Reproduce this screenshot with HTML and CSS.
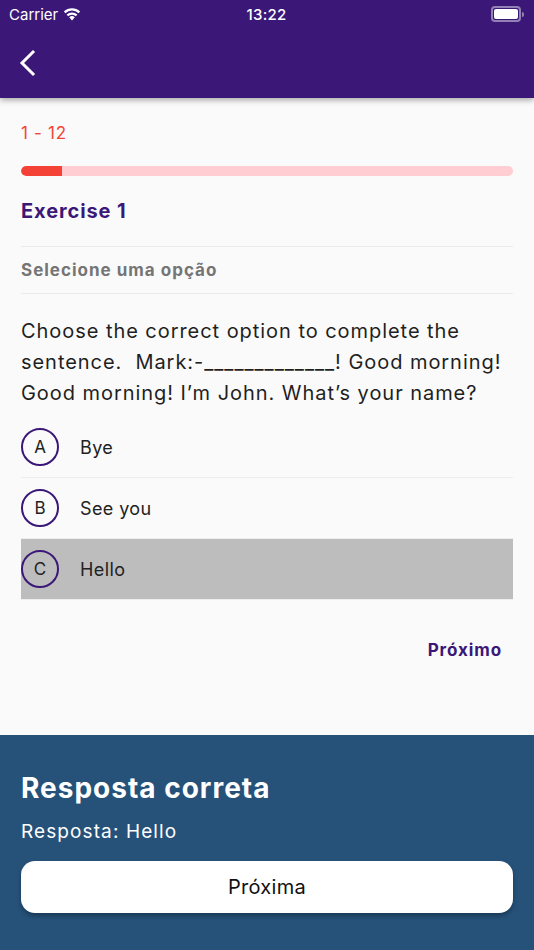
FILE: index.html
```html
<!DOCTYPE html>
<html lang="pt">
<head>
    <meta charset="UTF-8">
    <meta name="viewport" content="width=device-width, initial-scale=1.0">
    <title>Exercise 1</title>
    <link rel="stylesheet" href="styles.css">
</head>
<body>
    <div class="screen">
        <header class="app-bar">
            <div class="status-bar">
                <div class="status-left">
                    <span>Carrier</span>
                    <svg class="wifi" width="18" height="13" viewBox="0 0 18 13">
                        <path d="M9 12.5 L6.2 9.3 A4 4 0 0 1 11.8 9.3 Z" fill="#fff"/>
                        <path d="M3.6 6.6 A7.7 7.7 0 0 1 14.4 6.6 L12.9 8.3 A5.6 5.6 0 0 0 5.1 8.3 Z" fill="#fff"/>
                        <path d="M0.9 3.6 A11.6 11.6 0 0 1 17.1 3.6 L15.6 5.3 A9.4 9.4 0 0 0 2.4 5.3 Z" fill="#fff"/>
                    </svg>
                </div>
                <div class="status-time">13:22</div>
                <div class="status-right">
                    <div class="battery"><div class="battery-level"></div></div>
                    <div class="battery-nub"></div>
                </div>
            </div>
            <div class="toolbar">
                <svg class="back" width="20" height="28" viewBox="0 0 20 28">
                    <path d="M15 3 L4 14 L15 25" fill="none" stroke="#fff" stroke-width="3" stroke-linecap="square"/>
                </svg>
            </div>
        </header>

        <main class="content">
            <div class="counter">1 - 12</div>
            <div class="progress"><div class="progress-fill" style="width: 8.3%"></div></div>
            <h1 class="exercise-title">Exercise 1</h1>
            <div class="instruction">Selecione uma opção</div>
            <p class="question">Choose the correct option to complete the sentence.&nbsp; Mark:-_____________! Good morning! Good morning! I’m John. What’s your name?</p>

            <ul class="options">
                <li class="option">
                    <span class="letter">A</span>
                    <span class="option-text">Bye</span>
                </li>
                <li class="option">
                    <span class="letter">B</span>
                    <span class="option-text">See you</span>
                </li>
                <li class="option selected">
                    <span class="letter">C</span>
                    <span class="option-text">Hello</span>
                </li>
            </ul>

            <div class="next-row">
                <button type="button" class="next-link">Próximo</button>
            </div>
        </main>

        <footer class="result-sheet">
            <h2 class="result-title">Resposta correta</h2>
            <div class="result-answer">Resposta: Hello</div>
            <button type="button" class="result-btn">Próxima</button>
        </footer>
    </div>
</body>
</html>
```

FILE: styles.css
```css
body {
    margin: 0;
    background: #fafafa;
    font-family: Inter, 'Noto Sans', sans-serif;
    color: #1f1f1f;
}
.screen {
    display: flex;
    flex-direction: column;
    height: 950px;
    overflow: hidden;
}
.app-bar {
    background: #3b1878;
    height: 98px;
    box-shadow: 0 2px 6px rgba(0, 0, 0, 0.35);
    position: relative;
    z-index: 1;
}
.status-bar {
    height: 28px;
    display: flex;
    align-items: center;
    justify-content: space-between;
    padding: 0 10px 0 9px;
    color: #fff;
    font-size: 15px;
}
.status-left {
    display: flex;
    align-items: center;
    gap: 5px;
    width: 110px;
}
.status-time {
    font-weight: 500;
    font-size: 15px;
    letter-spacing: 0.3px;
}
.status-right {
    display: flex;
    align-items: center;
    justify-content: flex-end;
    width: 110px;
}
.battery {
    width: 24px;
    height: 10px;
    border: 2px solid rgba(255, 255, 255, 0.45);
    border-radius: 4px;
    padding: 1px;
    box-sizing: content-box;
    display: flex;
}
.battery-level {
    flex: 1;
    background: #fff;
    border-radius: 2px;
}
.battery-nub {
    width: 2px;
    height: 5px;
    background: rgba(255, 255, 255, 0.45);
    border-radius: 0 2px 2px 0;
    margin-left: 1px;
}
.toolbar {
    height: 70px;
    display: flex;
    align-items: center;
    padding-left: 18px;
}
.content {
    padding: 20px 21px 0;
}
.counter {
    color: #f44336;
    font-size: 17px;
    letter-spacing: 0.7px;
    line-height: 30px;
}
.progress {
    margin-top: 18px;
    height: 10px;
    border-radius: 5px;
    background: #ffcdd2;
    overflow: hidden;
}
.progress-fill {
    height: 100%;
    background: #f44336;
    border-radius: 5px 0 0 5px;
}
.exercise-title {
    margin: 0;
    padding: 21px 0 21px;
    font-size: 20px;
    font-weight: 700;
    color: #3b1878;
    line-height: 28px;
    letter-spacing: 0.9px;
    border-bottom: 1px solid #ebebeb;
}
.instruction {
    padding: 10px 0 9px;
    font-size: 17px;
    font-weight: 700;
    color: #757575;
    line-height: 27px;
    letter-spacing: 1px;
    border-bottom: 1px solid #ebebeb;
}
.question {
    margin: 22px 0 8px;
    font-size: 20px;
    line-height: 31px;
    letter-spacing: 0.95px;
    color: #1f1f1f;
}
.options {
    list-style: none;
    margin: 0;
    padding: 0;
}
.option {
    display: flex;
    align-items: center;
    height: 60px;
    border-bottom: 1px solid #ededed;
}
.option.selected {
    background: #bdbdbd;
}
.letter {
    width: 34px;
    height: 34px;
    border: 2px solid #3b1878;
    border-radius: 50%;
    display: flex;
    align-items: center;
    justify-content: center;
    font-size: 17px;
    color: #222;
}
.option-text {
    margin-left: 21px;
    font-size: 18px;
    letter-spacing: 0.4px;
    color: #222;
}
.next-row {
    display: flex;
    justify-content: flex-end;
    padding: 38px 11px 0 0;
}
.next-link {
    border: none;
    background: none;
    padding: 0;
    font-family: inherit;
    font-size: 17px;
    font-weight: 700;
    color: #3b1878;
    letter-spacing: 0.9px;
    line-height: 24px;
    cursor: pointer;
}
.result-sheet {
    margin-top: auto;
    background: #26527a;
    height: 215px;
    box-sizing: border-box;
    padding: 34px 21px 0;
    color: #fff;
}
.result-title {
    margin: 0;
    font-size: 28px;
    font-weight: 700;
    line-height: 38px;
    letter-spacing: 1px;
}
.result-answer {
    margin-top: 11px;
    font-size: 19px;
    line-height: 28px;
    letter-spacing: 1.1px;
}
.result-btn {
    margin-top: 15px;
    width: 100%;
    height: 52px;
    border: none;
    border-radius: 14px;
    background: #fff;
    color: #111;
    font-family: inherit;
    font-size: 20px;
    letter-spacing: 0.3px;
    box-shadow: 0 3px 5px rgba(0, 0, 0, 0.3);
    cursor: pointer;
}
```
